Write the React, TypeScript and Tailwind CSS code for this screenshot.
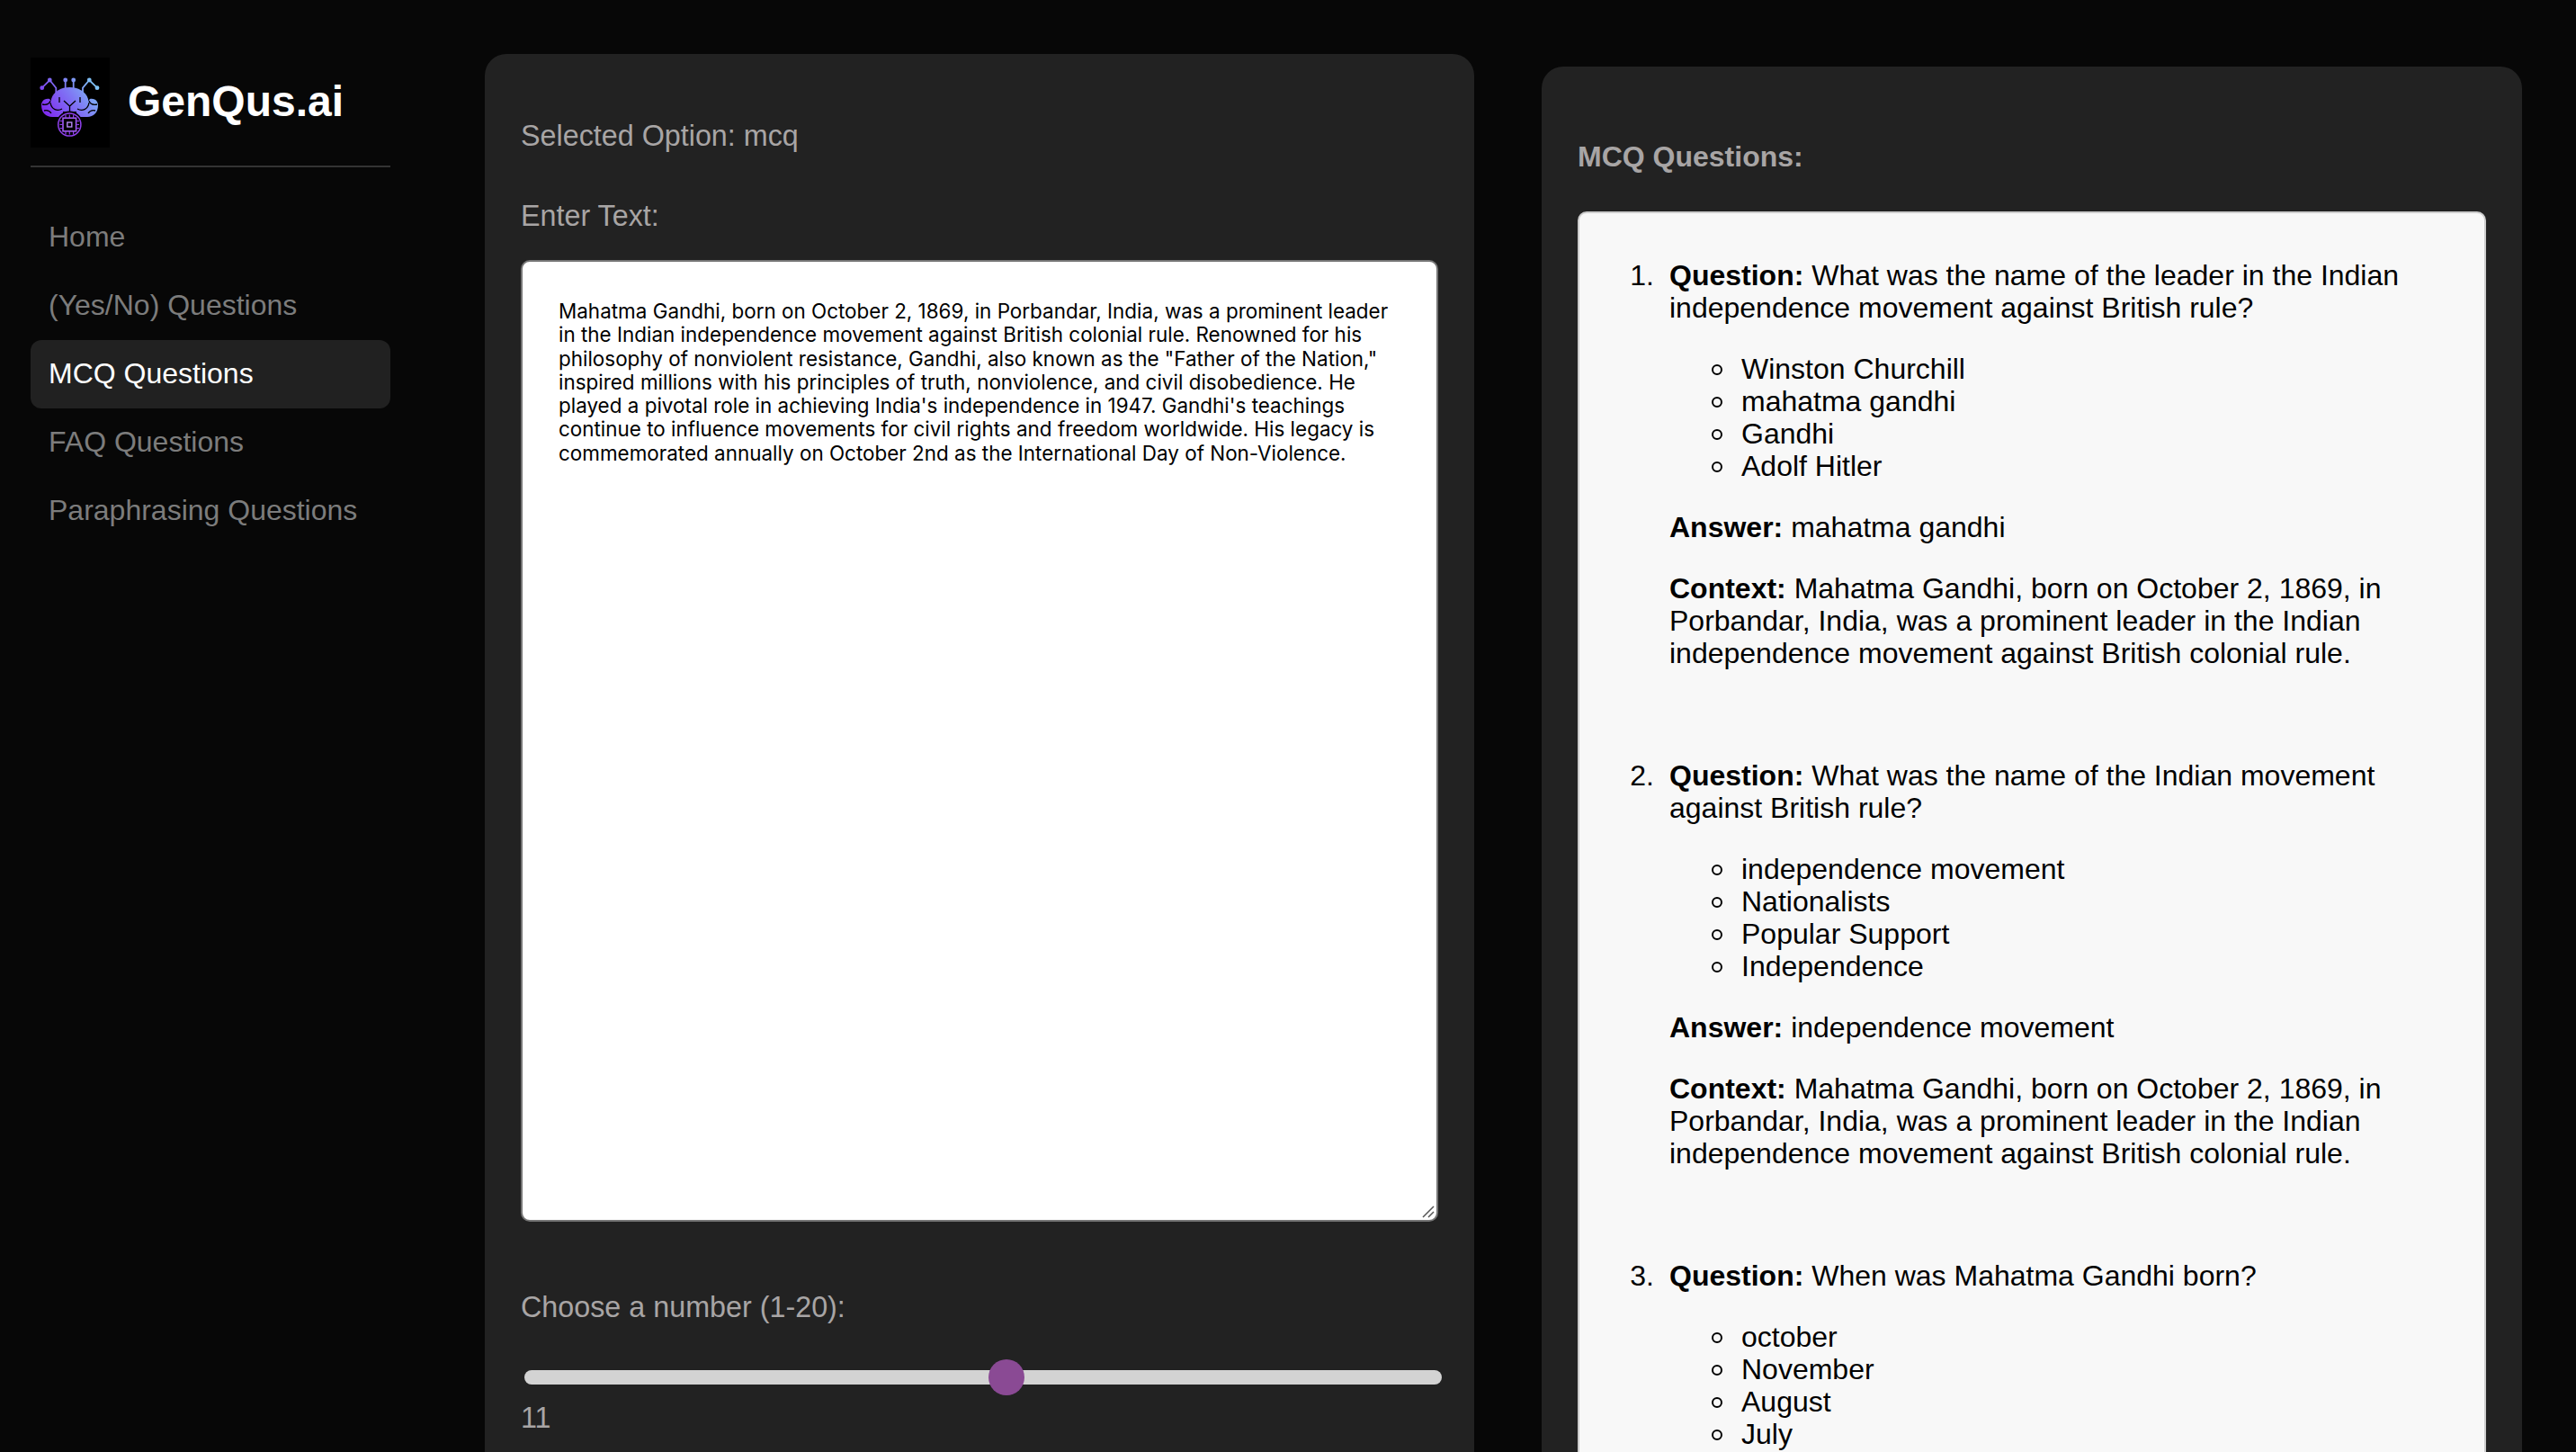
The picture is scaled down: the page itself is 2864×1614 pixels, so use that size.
import React from "react";

const nav = ["Home", "(Yes/No) Questions", "MCQ Questions", "FAQ Questions", "Paraphrasing Questions"];

const context =
  "Mahatma Gandhi, born on October 2, 1869, in Porbandar, India, was a prominent leader in the Indian independence movement against British colonial rule.";

const questions = [
  {
    q: "What was the name of the leader in the Indian independence movement against British rule?",
    options: ["Winston Churchill", "mahatma gandhi", "Gandhi", "Adolf Hitler"],
    a: "mahatma gandhi",
  },
  {
    q: "What was the name of the Indian movement against British rule?",
    options: ["independence movement", "Nationalists", "Popular Support", "Independence"],
    a: "independence movement",
  },
  {
    q: "When was Mahatma Gandhi born?",
    options: ["october", "November", "August", "July"],
    a: "October 2, 1869",
  },
];

const essay =
  'Mahatma Gandhi, born on October 2, 1869, in Porbandar, India, was a prominent leader in the Indian independence movement against British colonial rule. Renowned for his philosophy of nonviolent resistance, Gandhi, also known as the "Father of the Nation," inspired millions with his principles of truth, nonviolence, and civil disobedience. He played a pivotal role in achieving India\'s independence in 1947. Gandhi\'s teachings continue to influence movements for civil rights and freedom worldwide. His legacy is commemorated annually on October 2nd as the International Day of Non-Violence.';

function Logo() {
  return (
    <svg viewBox="0 0 88 100" className="w-[88px] h-[100px] bg-black shrink-0">
      <defs>
        <linearGradient id="lg" gradientUnits="userSpaceOnUse" x1="14" y1="66" x2="72" y2="24">
          <stop offset="0" stopColor="#7f22ee" />
          <stop offset="0.55" stopColor="#7f78f4" />
          <stop offset="1" stopColor="#7fcdf6" />
        </linearGradient>
      </defs>
      <g stroke="url(#lg)" strokeWidth="1.8" fill="none">
        <path d="M12.7 33.7 21.3 25 28.3 33.7V46" />
        <path d="M74 33.7 65.3 25 58 33.7V46" />
        <path d="M38.7 25V40M47.7 25V40" />
      </g>
      <g fill="url(#lg)">
        <circle cx="12.7" cy="33.7" r="2.4" />
        <circle cx="21.3" cy="25" r="2.4" />
        <circle cx="38.7" cy="25" r="2.4" />
        <circle cx="47.7" cy="25" r="2.4" />
        <circle cx="65.3" cy="25" r="2.4" />
        <circle cx="74" cy="33.7" r="2.4" />
        <path d="M23 46C26 37 34 33 43.3 33S61 37 64 46V60H23Z" />
        <path d="M21 46C14 45 12 50 12 53 12 61 17 66 24 66H36V54H28Z" />
        <path d="M66 46C73 45 75 50 75 53 75 61 70 66 63 66H51V54H59Z" />
      </g>
      <g stroke="#000" strokeWidth="1.3" fill="none">
        <path d="M13 52C18 53 21 51 22 48" />
        <path d="M74 52C69 53 66 51 65 48" />
        <path d="M15 59C19 58 21 59 23 62" />
        <path d="M72 59C68 58 66 59 64 62" />
        <path d="M22 50C23 58 30 60 35 57" />
        <path d="M65 50C64 58 57 60 52 57" />
        <path d="M43.5 62V54L37 48M43.5 54 50 48" />
        <path d="M32 44V50M55 44V50" />
      </g>
      <circle cx="43.3" cy="74.5" r="15" fill="#000" />
      <circle cx="43.3" cy="74.5" r="12.6" fill="none" stroke="#8f40ec" strokeWidth="1.5" />
      <rect x="36" y="67.2" width="14.6" height="14.6" fill="none" stroke="#a05cf0" strokeWidth="1.6" />
      <rect x="40.8" y="72" width="5" height="5" fill="none" stroke="#b488f2" strokeWidth="1.4" />
      <path
        d="M39 63.5V67M43.3 63.5V67M47.6 63.5V67M39 82V85.5M43.3 82V85.5M47.6 82V85.5M32.5 70.5H36M32.5 74.5H36M32.5 78.5H36M50.6 70.5H54M50.6 74.5H54M50.6 78.5H54"
        stroke="#8f40ec"
        strokeWidth="1.2"
      />
    </svg>
  );
}

export default function App() {
  return (
    <div className="flex items-start h-[1614px] overflow-hidden bg-[#070707] font-['Liberation_Sans',Arial,sans-serif] text-[32px] leading-[36px]">
      <aside className="w-[400px] ml-[34px] mt-[64px] shrink-0">
        <div className="flex items-center gap-[20px] h-[100px]">
          <Logo />
          <span className="text-[48px] leading-[56px] font-bold text-white -mt-[2px]">GenQus.ai</span>
        </div>
        <div className="h-[2px] mt-[20px] bg-[#333333]" />
        <nav className="mt-[40px] flex flex-col">
          {nav.map((n, i) => (
            <div
              key={n}
              className={
                i === 2
                  ? "h-[76px] px-[20px] pb-[2px] flex items-center rounded-[12px] bg-[#212121] text-white"
                  : "h-[76px] px-[20px] pb-[2px] flex items-center text-[#7c7c7c]"
              }
            >
              {n}
            </div>
          ))}
        </nav>
      </aside>

      <main className="w-[1100px] ml-[105px] mt-[60px] h-[1700px] shrink-0 rounded-t-[24px] bg-[#222222] px-[40px] text-[#a8a5a5] text-[32.3px]">
        <p className="mt-[73px]">Selected Option: mcq</p>
        <label className="block mt-[53px]">Enter Text:</label>
        <div className="relative mt-[31px] w-[1020px] h-[1069px]">
          <textarea
            readOnly
            value={essay}
            className="block w-full h-full resize-none rounded-[10px] border-2 border-[#767676] bg-white text-black font-['Inter',sans-serif] text-[22.45px] leading-[26.3px] pl-[40px] pr-[40px] pt-[42px] outline-none"
          />
          <svg viewBox="0 0 14 14" className="absolute right-[4px] bottom-[4px] w-[14px] h-[14px]">
            <path d="M1 13 13 1M7 13 13 7" stroke="#555555" strokeWidth="1.5" fill="none" />
          </svg>
        </div>
        <label className="block mt-[77px]">Choose a number (1-20):</label>
        <input
          type="range"
          min={1}
          max={20}
          defaultValue={11}
          className="block mt-[52px] ml-[4px] w-[1020px] h-[16px] appearance-none rounded-[8px] bg-[#d3d3d3] outline-none [&::-webkit-slider-thumb]:appearance-none [&::-webkit-slider-thumb]:w-[40px] [&::-webkit-slider-thumb]:h-[40px] [&::-webkit-slider-thumb]:rounded-full [&::-webkit-slider-thumb]:bg-[#8a4a94]"
        />
        <p className="mt-[19px]">11</p>
      </main>

      <section className="w-[1090px] ml-[75px] mt-[74px] h-[1700px] shrink-0 rounded-t-[24px] bg-[#222222] px-[40px] pt-[82px]">
        <h2 className="font-bold text-[#a8a5a5]">MCQ Questions:</h2>
        <div className="mt-[43px] w-[1010px] rounded-[10px] border-2 border-[#cccccc] bg-[#f8f8f8] px-[20px] pt-[20px] text-black">
          <ol className="mt-[31px] flex flex-col gap-[100px]">
            {questions.map((q, i) => (
              <li key={q.q} className="flex">
                <span className="w-[80px] shrink-0 pr-[17px] text-right">{i + 1}.</span>
                <div className="min-w-0 flex-1">
                  <p>
                    <strong className="font-bold">Question:</strong> {q.q}
                  </p>
                  <ul className="mt-[32px] flex flex-col">
                    {q.options.map((o) => (
                      <li key={o} className="flex items-center">
                        <span className="ml-[47px] mr-[21px] mt-[2px] w-[12px] h-[12px] shrink-0 rounded-full border-2 border-black" />
                        <span>{o}</span>
                      </li>
                    ))}
                  </ul>
                  <p className="mt-[32px]">
                    <strong className="font-bold">Answer:</strong> {q.a}
                  </p>
                  <p className="mt-[32px]">
                    <strong className="font-bold">Context:</strong> {context}
                  </p>
                </div>
              </li>
            ))}
          </ol>
        </div>
      </section>
    </div>
  );
}
